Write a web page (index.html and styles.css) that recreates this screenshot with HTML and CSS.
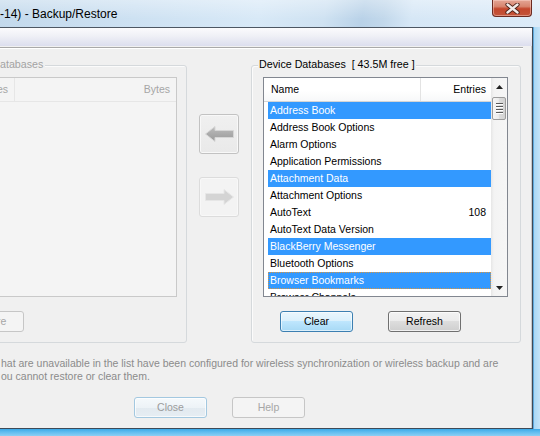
FILE: index.html
```html
<!DOCTYPE html>
<html>
<head>
<meta charset="utf-8">
<title>Backup/Restore</title>
<link rel="stylesheet" href="styles.css">
</head>
<body>
<div class="window">
  <div class="titlebar">
    <div class="title">-14) - Backup/Restore</div>
    <div class="close-x">
      <svg width="15" height="11" viewBox="0 0 15 11">
        <path d="M2.5 1.5 L12.5 9.5 M12.5 1.5 L2.5 9.5" stroke="#4a2018" stroke-width="4.2" stroke-linecap="round"/>
        <path d="M2.5 1.5 L12.5 9.5 M12.5 1.5 L2.5 9.5" stroke="#f2ebe9" stroke-width="2.4" stroke-linecap="round"/>
      </svg>
    </div>
  </div>
  <div class="frame">
    <div class="client">
      <div class="band"></div>
      <div class="sep"></div>
      <div class="content">
        <div class="groups">
          <div class="group group-left">
            <div class="legend legend-off">atabases</div>
            <div class="list list-off">
              <div class="lhead lhead-off">
                <span class="lc1">es</span>
                <span class="lc2">Bytes</span>
              </div>
            </div>
            <div class="btnrow">
              <div class="btn btn-off btn-cut">Restore</div>
            </div>
          </div>

          <div class="arrows">
            <div class="arrow-btn">
              <svg width="29" height="16" viewBox="0 0 29 16">
                <defs>
                  <linearGradient id="ga" x1="0" y1="0" x2="0" y2="1">
                    <stop offset="0" stop-color="#bdbdbd"/>
                    <stop offset="1" stop-color="#999"/>
                  </linearGradient>
                </defs>
                <path d="M0.5 8 L10 0.5 L10 4.5 L28.5 4.5 L28.5 11.5 L10 11.5 L10 15.5 Z" fill="url(#ga)" stroke="#d6d6d6" stroke-width="1"/>
              </svg>
            </div>
            <div class="arrow-btn arrow-off">
              <svg width="29" height="16" viewBox="0 0 29 16">
                <path d="M28.5 8 L19 0.5 L19 4.5 L0.5 4.5 L0.5 11.5 L19 11.5 L19 15.5 Z" fill="#d4d4d4" stroke="#e6e6e6" stroke-width="1"/>
              </svg>
            </div>
          </div>

          <div class="group group-right">
            <div class="legend">Device Databases&nbsp; [ 43.5M free ]</div>
            <div class="list">
              <div class="list-main">
                <div class="lhead">
                  <span class="hc1">Name</span>
                  <span class="hc2">Entries</span>
                </div>
                <div class="row sel"><span>Address Book</span></div>
                <div class="row"><span>Address Book Options</span></div>
                <div class="row"><span>Alarm Options</span></div>
                <div class="row"><span>Application Permissions</span></div>
                <div class="row sel"><span>Attachment Data</span></div>
                <div class="row"><span>Attachment Options</span></div>
                <div class="row"><span>AutoText</span><span class="num">108</span></div>
                <div class="row"><span>AutoText Data Version</span></div>
                <div class="row sel"><span>BlackBerry Messenger</span></div>
                <div class="row"><span>Bluetooth Options</span></div>
                <div class="row sel focus"><span>Browser Bookmarks</span></div>
                <div class="row"><span>Browser Channels</span></div>
              </div>
              <div class="vscroll">
                <div class="sb-btn">
                  <svg width="7" height="4" viewBox="0 0 7 4"><polygon points="0,4 3.5,0 7,4" fill="#222"/></svg>
                </div>
                <div class="thumb"><div class="grip"></div></div>
                <div class="sb-track"></div>
                <div class="sb-btn">
                  <svg width="7" height="4" viewBox="0 0 7 4"><polygon points="0,0 7,0 3.5,4" fill="#222"/></svg>
                </div>
              </div>
            </div>
            <div class="btnrow btnrow-right">
              <div class="btn btn-default">Clear</div>
              <div class="btn btn-normal">Refresh</div>
            </div>
          </div>
        </div>

        <p class="note">hat are unavailable in the list have been configured for wireless synchronization or wireless backup and are<br>ou cannot restore or clear them.</p>

        <div class="bottom-buttons">
          <div class="btn btn-close">Close</div>
          <div class="btn btn-off btn-help">Help</div>
        </div>
      </div>
    </div>
    <div class="rframe"></div>
  </div>
  <div class="bframe"></div>
</div>
</body>
</html>
```

FILE: styles.css
```css
html, body {
  margin: 0;
  padding: 0;
}

body {
  width: 540px;
  height: 436px;
  overflow: hidden;
  background: #cfe2f2;
}

.window {
  width: 540px;
  height: 436px;
  display: flex;
  flex-direction: column;
  font-family: "Liberation Sans", Arial, sans-serif;
  font-size: 10.5px;
  color: #000;
}

/* ---------- title bar ---------- */
.titlebar {
  height: 27px;
  flex: none;
  display: flex;
  justify-content: space-between;
  align-items: flex-start;
  background:
    linear-gradient(to bottom, rgba(255,255,255,0.35), rgba(255,255,255,0) 70%),
    linear-gradient(100deg, #c3d9ec 0%, #cde1f2 25%, #d8e9f7 48%, #cfe2f2 60%, #b9d2e8 67%, #c2d8eb 71%, #d6e7f6 76%, #dcebf8 100%);
}

.title {
  font-size: 12px;
  line-height: 15px;
  padding-top: 7px;
  white-space: nowrap;
}

.close-x {
  width: 40px;
  height: 17px;
  margin-right: 8px;
  box-sizing: border-box;
  border: 1px solid #6b2a21;
  border-top: none;
  border-radius: 0 0 4px 4px;
  background: linear-gradient(#e4a595, #d88670 40%, #c4472d 55%, #c3553a);
  box-shadow: inset 0 0 0 1px rgba(255, 220, 210, 0.45);
  display: flex;
  align-items: center;
  justify-content: center;
}

/* ---------- frame ---------- */
.frame {
  height: 402px;
  flex: none;
  display: flex;
}

.client {
  width: 533px;
  height: 402px;
  box-sizing: border-box;
  border-top: 1px solid #4d5763;
  border-right: 1px solid #3e4a58;
  border-bottom: 1px solid #3e4a58;
  background: #f0f0f0;
  overflow: hidden;
  box-shadow: inset -1px 0 0 #c9c9c9;
}

.rframe {
  width: 7px;
  background: linear-gradient(to right, #5ea9dc 0, #5ea9dc 1px, #a9d8f6 1px, #c4e4f8);
}

.bframe {
  height: 7px;
  flex: none;
  background: linear-gradient(#3ba9e8, #5dbbef 40%, #8ccff4);
}

.band {
  height: 18px;
  background: linear-gradient(#fbfbfd, #eff0f6 45%, #dcdeee);
}

.sep {
  width: 523px;
  height: 1px;
  margin-top: 1px;
  background: #a9a9a9;
  border-bottom: 1px solid #ffffff;
}

.content {
  padding-top: 16px;
}

/* ---------- groups ---------- */
.groups {
  display: flex;
  align-items: flex-start;
}

.group {
  height: 278px;
  box-sizing: border-box;
  border: 1px solid #d5d9dc;
  border-radius: 3px;
  box-shadow: inset 1px 1px 0 #fbfbfb;
  display: flex;
  flex-direction: column;
}

.group-left {
  width: 207px;
  margin-left: -20px;
}

.group-right {
  width: 270px;
  margin-left: 12px;
}

.legend {
  align-self: flex-start;
  margin: -8px 0 0 6px;
  padding: 0 1px;
  height: 13px;
  line-height: 13px;
  background: #f0f0f0;
  white-space: nowrap;
  font-size: 10.7px;
}

.legend-off {
  margin-left: 17px;
  padding: 0 2px 0 2px;
  color: #a3a3a3;
}

/* ---------- lists ---------- */
.list {
  margin: 6px 0 0 11px;
  width: 245px;
  height: 220px;
  box-sizing: border-box;
  border: 1px solid #828790;
  background: #fff;
  display: flex;
  overflow: hidden;
}

.list-off {
  width: 185px;
  border-color: #c9c9c9;
  background: #f4f4f4;
  display: block;
}

.list-main {
  width: 227px;
  overflow: hidden;
}

.lhead {
  height: 23px;
  line-height: 23px;
  border-bottom: 1px solid #d5d5d5;
  background: linear-gradient(#ffffff, #ffffff 55%, #f7f8f9);
  display: flex;
  white-space: nowrap;
}

.lhead-off {
  background: #f4f4f4;
  border-bottom-color: #e6e6e6;
  color: #a6a6a6;
}

.lc1 {
  width: 22px;
  border-right: 1px solid #e6e6e6;
  text-align: right;
  padding-right: 6px;
  box-sizing: border-box;
}

.lc2 {
  flex: 1;
  text-align: right;
  padding-right: 6px;
}

.hc1 {
  width: 157px;
  box-sizing: border-box;
  padding-left: 7px;
  border-right: 1px solid #e3e3e3;
}

.hc2 {
  flex: 1;
  text-align: right;
  padding-right: 5px;
}

.row {
  height: 17px;
  line-height: 17px;
  margin-left: 4px;
  padding: 0 5px 0 2px;
  display: flex;
  justify-content: space-between;
  white-space: nowrap;
  box-sizing: border-box;
}

.row.sel {
  background: #3399ff;
  color: #fff;
}

.row.focus {
  outline: 1px dotted #d9953f;
  outline-offset: -1px;
}

/* ---------- scrollbar ---------- */
.vscroll {
  width: 16px;
  display: flex;
  flex-direction: column;
  background: linear-gradient(to right, #e6e6e6, #f3f3f3 3px, #f6f6f6);
}

.sb-btn {
  height: 17px;
  flex: none;
  display: flex;
  align-items: center;
  justify-content: center;
}

.thumb {
  margin: 2px 1px 0 1px;
  height: 23px;
  flex: none;
  box-sizing: border-box;
  border: 1px solid #9c9c9c;
  border-radius: 2px;
  background: linear-gradient(to right, #f6f6f6, #ececec 45%, #dcdcdc 55%, #d2d2d2);
  display: flex;
  align-items: center;
  justify-content: center;
}

.grip {
  width: 7px;
  height: 11px;
  background: repeating-linear-gradient(#5a5a5a 0, #5a5a5a 1px, #ffffff 1px, #ffffff 2px, transparent 2px, transparent 3px);
}

.sb-track {
  flex: 1;
}

/* ---------- buttons ---------- */
.btnrow {
  display: flex;
  margin-top: 14px;
}

.btn {
  width: 73px;
  height: 21px;
  box-sizing: border-box;
  border-radius: 3px;
  line-height: 19px;
  text-align: center;
  white-space: nowrap;
  flex: none;
}

.btn-off {
  border: 1px solid #c6c6c6;
  background: #f4f4f4;
  color: #a6a6a6;
}

.btn-cut {
  width: 74px;
  margin-left: -31px;
  padding-left: 2px;
}

.btnrow-right .btn-default {
  margin-left: 28px;
}

.btnrow-right .btn-normal {
  margin-left: 35px;
}

.btn-default {
  border: 1px solid #3c7fb1;
  background: linear-gradient(#eaf6fd, #d9f0fc 50%, #bee6fd 50%, #a7d9f5);
  box-shadow: inset 0 0 0 1px rgba(255,255,255,0.6);
}

.btn-normal {
  border: 1px solid #707070;
  background: linear-gradient(#f2f2f2, #ebebeb 50%, #dddddd 50%, #cfcfcf);
  box-shadow: inset 0 0 0 1px rgba(255,255,255,0.7);
}

/* ---------- arrows ---------- */
.arrows {
  width: 40px;
  margin-left: 12px;
  padding-top: 49px;
  display: flex;
  flex-direction: column;
}

.arrow-btn {
  width: 40px;
  height: 40px;
  box-sizing: border-box;
  border: 1px solid #c2c2c2;
  border-radius: 3px;
  background: linear-gradient(#f0f0f0, #e9e9e9);
  box-shadow: inset 0 0 0 1px #f8f8f8;
  display: flex;
  align-items: center;
  justify-content: center;
}

.arrow-off {
  margin-top: 23px;
  border-color: #dcdcdc;
  background: #f3f3f3;
}

/* ---------- note & bottom ---------- */
.note {
  margin: 14px 0 0 0;
  padding-left: 1px;
  line-height: 13px;
  color: #8b8b8b;
  white-space: nowrap;
}

.bottom-buttons {
  display: flex;
  margin-top: 14px;
}

.btn-close {
  margin-left: 134px;
  border: 1px solid #a3c8e0;
  background: linear-gradient(#f5f9fc, #edf3f7 50%, #e2eaf0 50%, #e6edf3);
  box-shadow: inset 0 0 0 1px rgba(255,255,255,0.7);
  color: #9c9c9c;
}

.btn-help {
  margin-left: 25px;
}
```
